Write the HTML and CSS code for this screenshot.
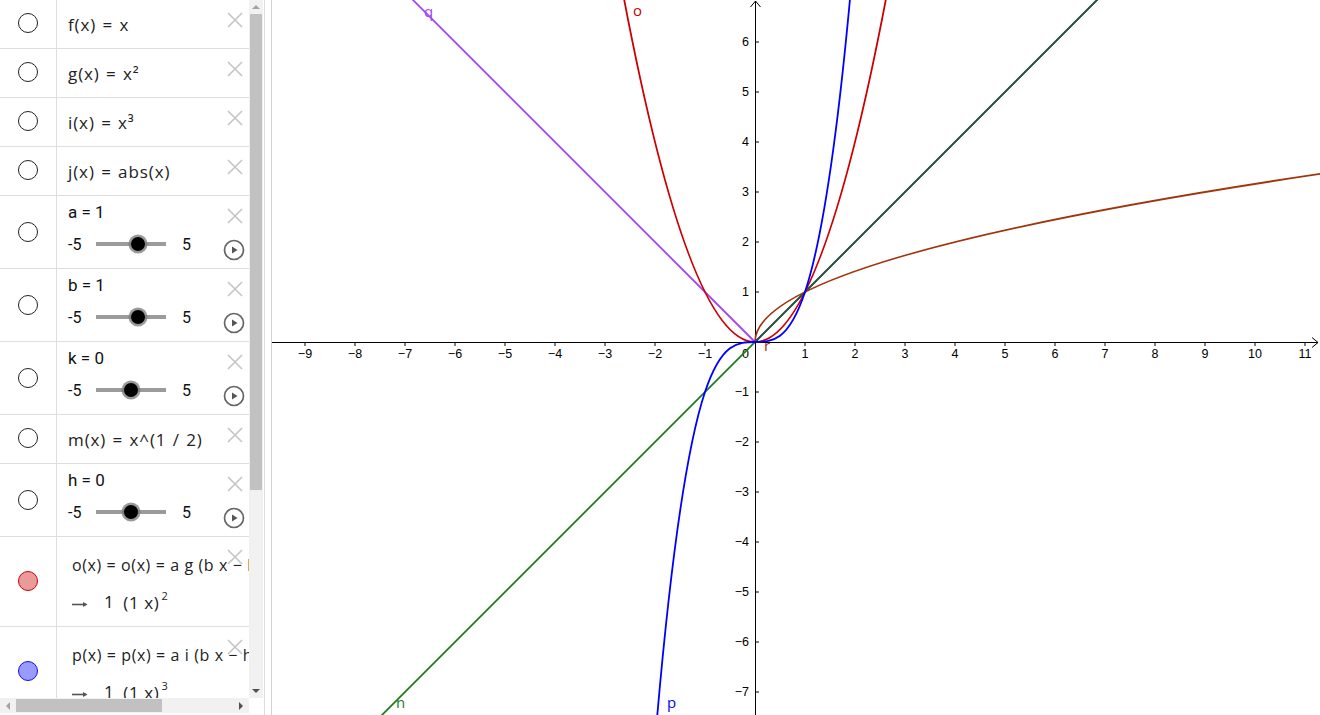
FILE: index.html
```html
<!DOCTYPE html>
<html>
<head>
<meta charset="utf-8">
<title>Graphing</title>
<link rel="stylesheet" href="styles.css">
</head>
<body>
<div class="app">
  <div class="algebra">
    <div class="algebra-main">
      <div class="list">
        <div class="row fn">
          <div class="marble"><span class="dot"></span></div>
          <div class="content"><span class="expr">f(x) = x</span></div>
          <svg class="del" viewBox="0 0 16 16"><path d="M1 1L15 15M15 1L1 15"/></svg>
        </div>
        <div class="row fn">
          <div class="marble"><span class="dot"></span></div>
          <div class="content"><span class="expr">g(x) = x²</span></div>
          <svg class="del" viewBox="0 0 16 16"><path d="M1 1L15 15M15 1L1 15"/></svg>
        </div>
        <div class="row fn">
          <div class="marble"><span class="dot"></span></div>
          <div class="content"><span class="expr">i(x) = x³</span></div>
          <svg class="del" viewBox="0 0 16 16"><path d="M1 1L15 15M15 1L1 15"/></svg>
        </div>
        <div class="row fn">
          <div class="marble"><span class="dot"></span></div>
          <div class="content"><span class="expr">j(x) = abs(x)</span></div>
          <svg class="del" viewBox="0 0 16 16"><path d="M1 1L15 15M15 1L1 15"/></svg>
        </div>
        <div class="row slider-row">
          <div class="marble"><span class="dot"></span></div>
          <div class="content">
            <div class="slabel">a = 1</div>
            <div class="slider"><span class="smin">-5</span><span class="track"><span class="knob" style="left: 60%"></span></span><span class="smax">5</span></div>
          </div>
          <svg class="del" viewBox="0 0 16 16"><path d="M1 1L15 15M15 1L1 15"/></svg>
          <svg class="play" viewBox="0 0 22 22"><circle cx="11" cy="11" r="9.5"/><path d="M9 7.5L9 14.5L14.5 11Z"/></svg>
        </div>
        <div class="row slider-row">
          <div class="marble"><span class="dot"></span></div>
          <div class="content">
            <div class="slabel">b = 1</div>
            <div class="slider"><span class="smin">-5</span><span class="track"><span class="knob" style="left: 60%"></span></span><span class="smax">5</span></div>
          </div>
          <svg class="del" viewBox="0 0 16 16"><path d="M1 1L15 15M15 1L1 15"/></svg>
          <svg class="play" viewBox="0 0 22 22"><circle cx="11" cy="11" r="9.5"/><path d="M9 7.5L9 14.5L14.5 11Z"/></svg>
        </div>
        <div class="row slider-row">
          <div class="marble"><span class="dot"></span></div>
          <div class="content">
            <div class="slabel">k = 0</div>
            <div class="slider"><span class="smin">-5</span><span class="track"><span class="knob" style="left: 50%"></span></span><span class="smax">5</span></div>
          </div>
          <svg class="del" viewBox="0 0 16 16"><path d="M1 1L15 15M15 1L1 15"/></svg>
          <svg class="play" viewBox="0 0 22 22"><circle cx="11" cy="11" r="9.5"/><path d="M9 7.5L9 14.5L14.5 11Z"/></svg>
        </div>
        <div class="row fn">
          <div class="marble"><span class="dot"></span></div>
          <div class="content"><span class="expr">m(x) = x^(1 / 2)</span></div>
          <svg class="del" viewBox="0 0 16 16"><path d="M1 1L15 15M15 1L1 15"/></svg>
        </div>
        <div class="row slider-row">
          <div class="marble"><span class="dot"></span></div>
          <div class="content">
            <div class="slabel">h = 0</div>
            <div class="slider"><span class="smin">-5</span><span class="track"><span class="knob" style="left: 50%"></span></span><span class="smax">5</span></div>
          </div>
          <svg class="del" viewBox="0 0 16 16"><path d="M1 1L15 15M15 1L1 15"/></svg>
          <svg class="play" viewBox="0 0 22 22"><circle cx="11" cy="11" r="9.5"/><path d="M9 7.5L9 14.5L14.5 11Z"/></svg>
        </div>
        <div class="row def-row">
          <div class="marble"><span class="dot red"></span></div>
          <div class="content def">
            <div class="expr2">o(x) = o(x) = a g (b x − h) + k</div>
            <div class="result"><svg class="arrow" viewBox="0 0 16 8"><path class="shaft" d="M0 4.5H14"/><path class="head" d="M11 2L15.5 4.5L11 7Z"/></svg><span class="num">1</span><span>(1 x)<sup>2</sup></span></div>
          </div>
          <svg class="del" viewBox="0 0 16 16"><path d="M1 1L15 15M15 1L1 15"/></svg>
        </div>
        <div class="row def-row">
          <div class="marble"><span class="dot blue"></span></div>
          <div class="content def">
            <div class="expr2">p(x) = p(x) = a i (b x − h) + k</div>
            <div class="result"><svg class="arrow" viewBox="0 0 16 8"><path class="shaft" d="M0 4.5H14"/><path class="head" d="M11 2L15.5 4.5L11 7Z"/></svg><span class="num">1</span><span>(1 x)<sup>3</sup></span></div>
          </div>
          <svg class="del" viewBox="0 0 16 16"><path d="M1 1L15 15M15 1L1 15"/></svg>
        </div>
      </div>
      <div class="vscroll">
        <span class="arr up"></span>
        <div class="vtrack"><div class="vthumb"></div></div>
        <span class="arr down"></span>
      </div>
    </div>
    <div class="hscroll-row">
      <div class="hscroll">
        <span class="arr left"></span>
        <div class="htrack"><div class="hthumb"></div></div>
        <span class="arr right"></span>
      </div>
      <div class="corner"></div>
    </div>
  </div>
  <div class="splitter"></div>
  <div class="graphics">
    <svg class="plot" width="1048" height="715" viewBox="0 0 1048 715">
      <g class="ticks">
        <path d="M33 342v4M83 342v4M133 342v4M183 342v4M233 342v4M283 342v4M333 342v4M383 342v4M433 342v4M533 342v4M583 342v4M633 342v4M683 342v4M733 342v4M783 342v4M833 342v4M883 342v4M933 342v4M983 342v4M1033 342v4"/>
        <path d="M483 42h4M483 92h4M483 142h4M483 192h4M483 242h4M483 292h4M483 392h4M483 442h4M483 492h4M483 542h4M483 592h4M483 642h4M483 692h4"/>
      </g>
      <g class="axes">
        <path d="M0 342.5H1046M1040 337.5L1046 342.5L1040 347.5"/>
        <path d="M483.5 715V1M478.5 7L483.5 1L488.5 7"/>
      </g>
      <g class="xlab">
        <text x="33" y="358">−9</text>
        <text x="83" y="358">−8</text>
        <text x="133" y="358">−7</text>
        <text x="183" y="358">−6</text>
        <text x="233" y="358">−5</text>
        <text x="283" y="358">−4</text>
        <text x="333" y="358">−3</text>
        <text x="383" y="358">−2</text>
        <text x="433" y="358">−1</text>
        <text x="533" y="358">1</text>
        <text x="583" y="358">2</text>
        <text x="633" y="358">3</text>
        <text x="683" y="358">4</text>
        <text x="733" y="358">5</text>
        <text x="783" y="358">6</text>
        <text x="833" y="358">7</text>
        <text x="883" y="358">8</text>
        <text x="933" y="358">9</text>
        <text x="983" y="358">10</text>
        <text x="1033" y="358">11</text>
      </g>
      <g class="ylab">
        <text x="477" y="358">0</text>
        <text x="477" y="46">6</text>
        <text x="477" y="96">5</text>
        <text x="477" y="146">4</text>
        <text x="477" y="196">3</text>
        <text x="477" y="246">2</text>
        <text x="477" y="296">1</text>
        <text x="477" y="396">−1</text>
        <text x="477" y="446">−2</text>
        <text x="477" y="496">−3</text>
        <text x="477" y="546">−4</text>
        <text x="477" y="596">−5</text>
        <text x="477" y="646">−6</text>
        <text x="477" y="696">−7</text>
      </g>
      <g class="curves">
        <path class="c-n" d="M83 742L883 -58"/>
        <path class="c-f" d="M483 342L883 -58"/>
        <path class="c-q" d="M83 -58L483 342"/>
        <path class="c-r" d="M483 342Q483 257 1061 172"/>
        <path class="c-o" d="M348 -22.5Q483 706.5 618 -22.5"/>
        <path class="c-p" d="M383 742C449.67 -58 516.33 742 583 -58"/>
      </g>
      <g class="labels">
        <text class="l-q" x="152" y="17">q</text>
        <text class="l-o" x="361" y="16">o</text>
        <text class="l-n" x="124" y="708">n</text>
        <text class="l-p" x="395" y="708">p</text>
        <text class="l-r" x="492" y="351">r</text>
      </g>
    </svg>
  </div>
</div>
</body>
</html>
```
FILE: styles.css
```css
* { box-sizing: border-box; }
html, body { margin: 0; padding: 0; background: #fff; overflow: hidden; }
body { width: 1320px; height: 715px; font-family: "Open Sans", sans-serif; color: #222; }

.app { display: flex; height: 715px; }

.algebra { width: 265px; border-right: 1px solid #dcdcdc; display: flex; flex-direction: column; }
.algebra-main { display: flex; height: 698px; }
.list { width: 249px; height: 698px; overflow: hidden; }

.row { position: relative; display: flex; border-bottom: 1px solid #dedede; width: 249px; }
.row.fn { height: 49px; }
.row.slider-row { height: 73px; }
.row.def-row { height: 90px; flex-shrink: 0; }

.marble { width: 57px; flex-shrink: 0; border-right: 1px solid #dedede; display: flex; justify-content: center; }
.fn .marble { padding-top: 13px; }
.slider-row .marble { padding-top: 26px; }
.def-row .marble { padding-top: 34px; }
.dot { display: block; width: 20px; height: 20px; margin-left: -1px; border-radius: 50%; border: 1.3px solid #222; background: #fff; }
.dot.red { background: #eb9a9c; border-color: #cc0000; }
.dot.blue { background: #9a9bff; border-color: #1010ee; }

.content { flex: 1; min-width: 0; white-space: nowrap; }
.fn .content { padding: 14px 0 0 11px; }
.expr { font-size: 17px; letter-spacing: 0.9px; word-spacing: 1px; line-height: 22px; color: #222; }

.slider-row .content { padding: 5px 0 0 11px; font-family: Roboto, sans-serif; color: #111; }
.slabel { font-size: 17px; line-height: 22px; }
.slider { display: flex; align-items: center; height: 22px; margin-top: 10px; font-size: 16px; }
.smin { width: 28px; }
.track { position: relative; width: 70px; height: 4px; background: #9b9b9b; }
.knob { position: absolute; top: 50%; width: 14px; height: 14px; margin: -7px 0 0 -7px; border-radius: 50%; background: #000; box-shadow: 0 0 0 2.5px rgba(120,120,120,0.75); }
.smax { margin-left: 16px; }

.def { padding: 17px 0 0 15px; }
.expr2 { font-size: 16px; line-height: 22px; letter-spacing: 0.6px; color: #222; }
.result { display: flex; align-items: center; margin-top: 13px; height: 24px; font-size: 17px; letter-spacing: 0.6px; color: #222; }
.arrow { width: 16px; height: 8px; margin-top: 6px; }
.arrow .shaft { stroke: #555; stroke-width: 1.6; fill: none; }
.arrow .head { fill: #555; }
.num { margin: 0 9px 0 16px; }
.result sup { font-size: 11px; vertical-align: 9px; margin-left: 2px; }

.del { position: absolute; left: 227px; top: 12px; width: 16px; height: 16px; fill: none; stroke: #c6c6c6; stroke-width: 1.7; }
.play { position: absolute; left: 223px; top: 43px; width: 22px; height: 22px; }
.play circle { fill: none; stroke: #666; stroke-width: 1.7; }
.play path { fill: #555; }

.vscroll { width: 14px; height: 698px; background: #f1f1f1; display: flex; flex-direction: column; align-items: center; }
.vtrack { flex: 1; width: 100%; padding: 0 1px; }
.vthumb { margin-top: 1px; height: 476px; background: #c1c1c1; }
.arr { display: block; width: 0; height: 0; border: 4px solid transparent; }
.arr.up { border-bottom: 4px solid #a3a3a3; border-top-width: 0; margin: 5px 0 4px; }
.arr.down { border-top: 4px solid #505050; border-bottom-width: 0; margin: 4px 0 5px; }

.hscroll-row { display: flex; height: 17px; }
.hscroll { width: 249px; height: 15px; background: #f1f1f1; display: flex; align-items: center; }
.htrack { flex: 1; height: 100%; padding: 1px 0; }
.hthumb { width: 146px; height: 13px; background: #c1c1c1; }
.arr.left { border-right: 4px solid #a3a3a3; border-left-width: 0; margin: 0 6px 0 6px; }
.arr.right { border-left: 4px solid #505050; border-right-width: 0; margin: 0 6px 0 8px; }
.corner { width: 15px; }

.splitter { width: 6px; background: #fff; }
.graphics { flex: 1; border-left: 1px solid #d3d3d3; overflow: hidden; }
.plot { display: block; }

.axes path { fill: none; stroke: #000; stroke-width: 1; }
.ticks path { fill: none; stroke: #000; stroke-width: 1; }
.xlab text { font-family: "Liberation Sans", Arial, sans-serif; font-size: 12.5px; text-anchor: middle; fill: #000; }
.ylab text { font-family: "Liberation Sans", Arial, sans-serif; font-size: 12.5px; text-anchor: end; fill: #000; }

.curves path { fill: none; stroke-width: 1.8; }
.c-n { stroke: #1e7a1e; }
.c-f { stroke: #2f4d4a; }
.c-q { stroke: #a044ff; }
.c-r { stroke: #a0350b; }
.c-o { stroke: #cc0000; }
.c-p { stroke: #0000ff; }

.labels text { font-family: "Open Sans", sans-serif; font-size: 15px; }
.l-q { fill: #a044ff; }
.l-o { fill: #cc0000; }
.l-n { fill: #1e7a1e; }
.l-p { fill: #0000ff; }
.l-r { fill: #a0350b; }
```
